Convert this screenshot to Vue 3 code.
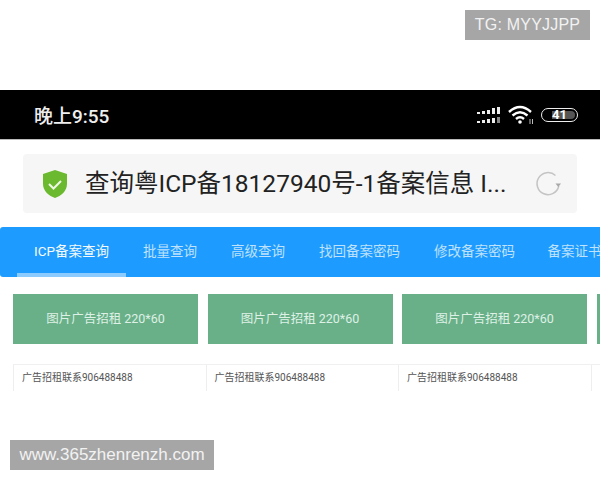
<script setup>
const tabs = [
  { label: 'ICP备案查询', width: 109, active: true },
  { label: '批量查询', width: 88 },
  { label: '高级查询', width: 88 },
  { label: '找回备案密码', width: 115 },
  { label: '修改备案密码', width: 115 },
  { label: '备案证书', width: 85 }
]
// the 4th column runs off the page, only its edge shows
const ads = ['图片广告招租 220*60', '图片广告招租 220*60', '图片广告招租 220*60', '']
const links = ['广告招租联系906488488', '广告招租联系906488488', '广告招租联系906488488', '']
const signalTop = [2, 3, 4, 6, 7]
const signalBottom = [2, 3, 4, 5, 6]
</script>

<template>
  <div class="page">
    <div class="mark mark-top">TG: MYYJJPP</div>

    <header class="status">
      <span class="time">晚上9:55</span>
      <div class="status-icons">
        <div class="signal">
          <div class="signal-row">
            <i v-for="(h, i) in signalTop" :key="i" :style="{ height: h + 'px' }"></i>
          </div>
          <div class="signal-row">
            <i v-for="(h, i) in signalBottom" :key="i" :style="{ height: h + 'px' }"></i>
          </div>
        </div>
        <svg class="wifi" width="26" height="20" viewBox="0 0 26 20" fill="none" stroke="#fff" stroke-width="2.4">
          <path d="M1 7 Q12 -3 23 7" />
          <path d="M4.5 10.5 Q12 4 19.5 10.5" />
          <path d="M8 14 Q12 10.5 16 14" />
          <circle cx="12" cy="17" r="1.8" fill="#fff" stroke="none" />
          <path d="M22 14v5M24.5 14v5" stroke-width="1" stroke="#bbb" />
        </svg>
        <div class="battery">
          <div class="battery-fill"></div>
          <span>41</span>
        </div>
      </div>
    </header>

    <div class="address-wrap">
      <div class="address">
        <svg class="shield" width="26" height="30" viewBox="0 0 26 30">
          <path d="M13 1 L25 5 V15 C25 22 19 27 13 29 C7 27 1 22 1 15 V5 Z" fill="#6bb92f" />
          <path d="M7 15 L11.5 19.5 L19 12" fill="none" stroke="#eef8e4" stroke-width="2" />
        </svg>
        <span class="title">查询粤ICP备18127940号-1备案信息 I...</span>
        <svg class="reload" width="26" height="26" viewBox="0 0 26 26" fill="none" stroke="#c4c4c4" stroke-width="1.5">
          <path d="M20.5 4.5 A11 11 0 1 0 23.8 15" />
          <path d="M20.5 12.5 L26 12.5 L23.3 16 Z" fill="#a8a8a8" stroke="none" />
        </svg>
      </div>
    </div>

    <nav class="tabs">
      <div
        v-for="tab in tabs"
        :key="tab.label"
        class="tab"
        :class="{ active: tab.active }"
        :style="{ width: tab.width + 'px' }"
      >{{ tab.label }}</div>
    </nav>

    <div class="ads">
      <div v-for="(ad, i) in ads" :key="i" class="ad">{{ ad }}</div>
    </div>

    <div class="links">
      <div v-for="(link, i) in links" :key="i" class="link">{{ link }}</div>
    </div>

    <div class="mark mark-bottom">www.365zhenrenzh.com</div>
  </div>
</template>

<style>
html, body {
  margin: 0;
  background: #fff;
}
</style>

<style scoped>
.page {
  position: relative;
  width: 600px;
  height: 480px;
  padding-top: 90px;
  box-sizing: border-box;
  overflow: hidden;
  background: #fff;
  font-family: Roboto, "Noto Sans CJK SC", sans-serif;
}

.mark {
  position: absolute;
  height: 30px;
  line-height: 30px;
  background: #a6a6a6;
  color: #f2f2f2;
  font-family: "Liberation Sans", Arial, sans-serif;
  text-align: center;
}

.mark-top {
  top: 10px;
  left: 465px;
  width: 125px;
  font-size: 16px;
  letter-spacing: 0.2px;
}

.mark-bottom {
  top: 440px;
  left: 10px;
  width: 204px;
  font-size: 17px;
}

.status {
  height: 49px;
  background: #000;
  border-bottom: 1px solid #bbb;
  display: flex;
  align-items: center;
  justify-content: space-between;
  padding: 0 22px 0 34px;
  color: #eee;
}

.time {
  font-size: 19px;
  font-weight: 500;
}

.status-icons {
  display: flex;
  align-items: center;
  gap: 8px;
}

.signal {
  display: flex;
  flex-direction: column;
  gap: 3px;
}

.signal-row {
  display: flex;
  align-items: flex-end;
  gap: 2px;
}

.signal-row i {
  display: block;
  width: 3px;
  background: #eee;
}

.signal-row:last-child i:last-child {
  background: #888;
}

.wifi {
  margin-right: -1px;
}

.battery {
  position: relative;
  width: 25px;
  height: 12px;
  padding-left: 10px;
  border: 1.5px solid #eee;
  border-radius: 8px;
  overflow: hidden;
  display: flex;
  align-items: center;
}

.battery-fill {
  position: absolute;
  right: 2px;
  top: 2px;
  bottom: 2px;
  width: 23px;
  background: #555;
  border-radius: 0 5px 5px 0;
}

.battery span {
  position: relative;
  color: #fff;
  font-size: 13px;
  font-weight: 700;
  line-height: 12px;
}

.address-wrap {
  height: 87px;
  padding: 14px 23px 0;
  box-sizing: border-box;
}

.address {
  width: 554px;
  height: 59px;
  background: #f6f6f6;
  border-radius: 4px;
  display: flex;
  align-items: center;
  padding: 0 16px 0 19px;
  box-sizing: border-box;
}

.shield {
  flex: none;
}

.title {
  margin-left: 17px;
  flex: 1;
  font-size: 24.5px;
  line-height: 59px;
  height: 59px;
  color: #222;
  white-space: nowrap;
  overflow: hidden;
}

.reload {
  flex: none;
}

.tabs {
  height: 50px;
  background: #1e9bff;
  border-radius: 3px 0 0 3px;
  display: flex;
  padding-left: 17px;
  overflow: hidden;
}

.tab {
  flex: none;
  box-sizing: border-box;
  height: 50px;
  line-height: 48px;
  text-align: center;
  font-size: 13.5px;
  color: #bfe2ff;
  white-space: nowrap;
}

.tab.active {
  color: #f4faff;
  border-bottom: 4px solid #8ccbfd;
}

.ads {
  display: flex;
  gap: 9.5px;
  padding: 17px 0 0 13px;
  overflow: hidden;
}

.ad {
  flex: none;
  width: 185px;
  height: 50px;
  line-height: 50px;
  background: #69b088;
  color: #dff0e6;
  font-size: 12.5px;
  text-align: center;
}

.links {
  display: flex;
  margin: 20px 0 0 13px;
  height: 26px;
  border-top: 1px solid #f0f0f0;
}

.link {
  flex: none;
  width: 192.5px;
  box-sizing: border-box;
  padding-left: 8px;
  border-left: 1px solid #eee;
  font-size: 10px;
  line-height: 25px;
  color: #555;
}
</style>
